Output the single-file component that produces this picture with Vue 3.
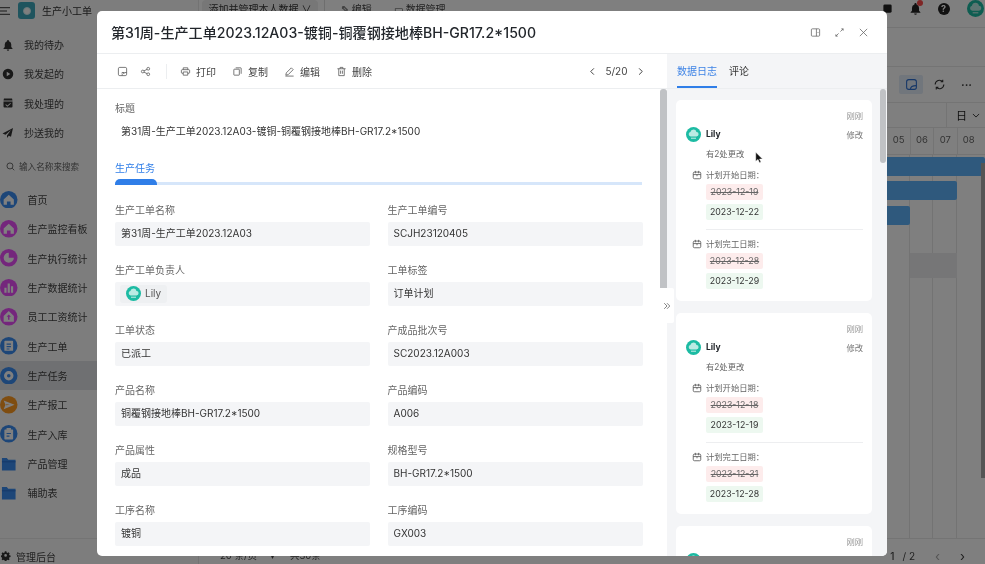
<script setup>
const P = {
  home: 'M12 5 5 11.5V19h4.5v-4.5h5V19H19v-7.5z',
  pie: 'M12 5a7 7 0 1 0 7 7h-7z',
  bars: 'M6 12h3v7H6zM10.5 6h3v13h-3zM15 10h3v9h-3z',
  houseUp: 'M12 4 5 11v8h14v-8zm0 5 3 3h-2v4h-2v-4H9z',
  doc: 'M7 5h10a1 1 0 0 1 1 1v12a1 1 0 0 1-1 1H7a1 1 0 0 1-1-1V6a1 1 0 0 1 1-1zm2 4v1.5h6V9zm0 3.5V14h6v-1.5zm0 3.2v1.3h4v-1.3z',
  ring: 'M12 5.5a6.5 6.5 0 1 0 0 13 6.5 6.5 0 0 0 0-13zm0 4a2.500 2.500 0 1 1 0 5 2.500 2.500 0 0 1 0-5z',
  send: 'M5 6 20 12 5 18l2.500-6zM8.500 11.200v1.600l5-.800z',
  clip: 'M9 4h6v2h2a1 1 0 0 1 1 1v12a1 1 0 0 1-1 1H7a1 1 0 0 1-1-1V7a1 1 0 0 1 1-1h2zm0 7v1.500h6V11zm0 3.500V16h4v-1.500z'
}
const topNav = [
  { t: '我的待办', d: 'M12 2a2 2 0 0 0-2 2v.6A6.500 6.500 0 0 0 5.500 11v5L3 19v1h18v-1l-2.500-3v-5A6.500 6.500 0 0 0 14 4.600V4a2 2 0 0 0-2-2zM9.500 21a2.500 2.500 0 0 0 5 0z' },
  { t: '我发起的', d: 'M12 1.500a10.500 10.500 0 1 0 0 21 10.500 10.500 0 0 0 0-21zM9.500 7.500l7 4.500-7 4.500z' },
  { t: '我处理的', d: 'M4 3h16l1 4H3zM3 9h18v10a2 2 0 0 1-2 2H5a2 2 0 0 1-2-2zm13.600 2.800-5.800 5-2.800-2.500-1.300 1.400 4.100 3.700 7.100-6.200z' },
  { t: '抄送我的', d: 'M22 2 1 13l6 2.500L18 6l-8 11v5l3.500-4.500 4.500 2z' }
]
const nav = [
  { t: '首页', c: '#3a8cf0', p: P.home },
  { t: '生产监控看板', c: '#e84cf8', p: P.home },
  { t: '生产执行统计', c: '#e84cf8', p: P.pie },
  { t: '生产数据统计', c: '#e84cf8', p: P.bars },
  { t: '员工工资统计', c: '#e84cf8', p: P.houseUp },
  { t: '生产工单', c: '#3a8cf0', p: P.doc },
  { t: '生产任务', c: '#3a8cf0', p: P.ring, on: true },
  { t: '生产报工', c: '#ff9a20', p: P.send },
  { t: '生产入库', c: '#3a8cf0', p: P.clip },
  { t: '产品管理', folder: true },
  { t: '辅助表', folder: true }
]
const tools = [
  { t: '打印', d: 'M7 8V4h10v4M7 16H5a2 2 0 0 1-2-2v-4a2 2 0 0 1 2-2h14a2 2 0 0 1 2 2v4a2 2 0 0 1-2 2h-2M7 13h10v7H7z' },
  { t: '复制', d: 'M8 4h11a1 1 0 0 1 1 1v12M4 8a1 1 0 0 1 1-1h10a1 1 0 0 1 1 1v11a1 1 0 0 1-1 1H5a1 1 0 0 1-1-1z' },
  { t: '编辑', d: 'M4 20l1-5L16 4l4 4L9 19zM3 22h18' },
  { t: '删除', d: 'M3 6h18M9 6V3h6v3M6 6v15h12V6M10 10v7M14 10v7' }
]
const fields = [
  ['生产工单名称', '第31周-生产工单2023.12A03'], ['生产工单编号', 'SCJH23120405'],
  ['生产工单负责人', 'Lily'], ['工单标签', '订单计划'],
  ['工单状态', '已派工'], ['产成品批次号', 'SC2023.12A003'],
  ['产品名称', '铜覆钢接地棒BH-GR17.2*1500'], ['产品编码', 'A006'],
  ['产品属性', '成品'], ['规格型号', 'BH-GR17.2*1500'],
  ['工序名称', '镀铜'], ['工序编码', 'GX003']
]
const logs = [
  { a: [['计划开始日期：', '2023-12-19', '2023-12-22'], ['计划完工日期：', '2023-12-28', '2023-12-29']] },
  { a: [['计划开始日期：', '2023-12-18', '2023-12-19'], ['计划完工日期：', '2023-12-31', '2023-12-28']] },
  { a: [] }
]
const days = ['05', '06', '07', '08']
</script>

<template>
  <div class="root">
    <aside class="side">
      <div class="brand">
        <svg class="burger" viewBox="0 0 10 8"><path d="M0 .7h10M0 4h7M0 7.300h10" /></svg>
        <span class="logo"><i></i></span>
        <span class="brand-name">生产小工单</span>
      </div>
      <div class="top-list">
        <div v-for="n in topNav" :key="n.t" class="top-row">
          <svg class="top-ic" viewBox="0 0 24 24"><path :d="n.d" /></svg>
          <span>{{ n.t }}</span>
        </div>
      </div>
      <div class="search">
        <svg viewBox="0 0 24 24"><circle cx="10.500" cy="10.500" r="8" /><path d="m16.500 16.500 5.500 5.500" /></svg>
        <span>输入名称来搜索</span>
      </div>
      <div v-for="n in nav" :key="n.t" class="nav-row" :class="{ on: n.on }">
        <svg v-if="n.folder" class="nav-ic" viewBox="0 0 18 18"><path fill="#3a8cf0" d="M2 3h5l1.500 2H16v11H2z" /><path fill="#2a70d0" d="M2 6.500h14v1H2z" /></svg>
        <svg v-else class="nav-ic" viewBox="0 0 24 24"><circle cx="12" cy="12" r="12" :fill="n.c" /><path fill="#fff" fill-rule="evenodd" :d="n.p" /></svg>
        <span>{{ n.t }}</span>
      </div>
      <div class="admin">
        <svg viewBox="0 0 24 24"><path fill-rule="evenodd" d="m10 2h4l.7 3 2.500 1.100 2.700-1.600 2.700 2.800-1.600 2.700.9 2.400 3 .6v4l-3 .7-1 2.400 1.600 2.700-2.800 2.700-2.600-1.600-2.400 1-.7 3h-4l-.7-3-2.400-1-2.600 1.600-2.800-2.700 1.600-2.700-1-2.400-3-.7v-4l3-.6 1-2.400-1.600-2.700 2.800-2.800 2.600 1.600 2.400-1.100zm2 7a3.500 3.500 0 1 0 0 7 3.500 3.500 0 0 0 0-7z" transform="translate(0 -1) scale(.92)" /></svg>
        <span>管理后台</span>
      </div>
    </aside>

    <main class="page">
      <header class="bar-top">
        <span class="ghost-btn">添加并管理本人数据 ∨</span>
        <span class="bar-sep"></span>
        <span class="bar-link">✎ 编辑</span>
        <span class="bar-link wide">▭ 数据管理</span>
        <span class="bar-right">
          <svg class="rt-ic" viewBox="0 0 24 24"><rect x="3" y="3" width="18" height="18" rx="3" /></svg>
          <span class="bell">
            <svg class="rt-ic" viewBox="0 0 24 24"><path d="M12 2a2 2 0 0 0-2 2v.6A6.500 6.500 0 0 0 5.500 11v5L3 19v1h18v-1l-2.500-3v-5A6.500 6.500 0 0 0 14 4.600V4a2 2 0 0 0-2-2zM9.500 21a2.500 2.500 0 0 0 5 0z" /></svg>
            <i class="dot"></i>
          </span>
          <span class="help">?</span>
          <svg class="bg-avatar" viewBox="0 0 24 24">
            <circle cx="12" cy="12" r="12" fill="#1cbba3" />
            <path fill="#fff" fill-opacity=".7" d="M7.500 15a3.500 3.500 0 0 1-.5-6.900 5 5 0 0 1 9.800-.1A3.500 3.500 0 0 1 16.500 15z" />
            <rect x="8" y="17" width="8" height="2" fill="#fff" fill-opacity=".6" />
          </svg>
        </span>
      </header>
      <div class="bar-tabs"></div>
      <div class="bar-tools">
        <span class="tool-on">
          <svg viewBox="0 0 24 24"><rect x="3" y="3" width="18" height="18" rx="4" /><path d="M10 21c0-5 3-7 11-7" /></svg>
        </span>
        <svg class="tool-ref" viewBox="0 0 24 24"><path d="M20 12a8 8 0 0 1-14 5M4 12a8 8 0 0 1 14-5M18 3v4h-4M6 21v-4h4" /></svg>
        <span class="tool-dots">···</span>
      </div>
      <div class="bar-view"><span class="view-sep"></span><span>日</span><svg viewBox="0 0 12 8"><path d="m1 1.500 5 5 5-5" /></svg></div>
      <div class="bar-days"><span v-for="d in days" :key="d">{{ d }}</span></div>
      <div class="chart">
        <i class="gline" style="right: 75px"></i>
        <i class="gline" style="right: 52px"></i>
        <i class="gline" style="right: 28px"></i>
        <i class="gbar" style="top: 2px; right: 0; width: 300px"></i>
        <i class="gbar" style="top: 26px; right: 28px; width: 300px"></i>
        <i class="gbar" style="top: 51px; right: 75px; width: 300px"></i>
        <i class="gshade"></i>
        <i class="gscroll"></i>
      </div>
      <footer class="bar-foot">
        <span class="foot-a">20 条/页</span>
        <span class="foot-b">▾</span>
        <span class="foot-c">共30条</span>
        <span class="foot-r"><b>1</b><span>/ 2</span><em class="faint">‹</em><em>›</em></span>
      </footer>
    </main>

    <div class="overlay">
      <section class="modal">
        <header class="m-head">
          <h1>第31周-生产工单2023.12A03-镀铜-铜覆钢接地棒BH-GR17.2*1500</h1>
          <svg class="h-ic" viewBox="0 0 24 24"><rect x="3" y="4" width="18" height="16" rx="2" /><path d="M14 4v16M16.500 12h2" /></svg>
          <svg class="h-ic" viewBox="0 0 24 24"><path d="M14 10l6-6M16 4h4v4M10 14l-6 6M8 20H4v-4" /></svg>
          <svg class="h-ic" viewBox="0 0 24 24"><path d="m4 4 16 16M20 4 4 20" /></svg>
        </header>
        <div class="m-body">
          <div class="left">
            <div class="toolbar">
              <svg class="t-ic" viewBox="0 0 24 24"><rect x="3" y="3" width="18" height="18" rx="3" /><path d="M11 21c0-4 3-7 10-7M10 16a3 2 0 0 1 6 0" /></svg>
              <svg class="t-ic second" viewBox="0 0 24 24"><circle cx="6" cy="12" r="3" /><circle cx="18" cy="6" r="3" /><circle cx="18" cy="18" r="3" /><path d="m8.700 10.600 6.600-3.200M8.700 13.400l6.600 3.200" /></svg>
              <i class="t-sep"></i>
              <span v-for="t in tools" :key="t.t" class="t-btn">
                <svg class="t-ic" viewBox="0 0 24 24"><path :d="t.d" /></svg>
                {{ t.t }}
              </span>
              <span class="pager">
                <svg viewBox="0 0 10 12"><path d="M7 1.500 2.500 6 7 10.500" /></svg>
                <span>5/20</span>
                <svg viewBox="0 0 10 12"><path d="M3 1.500 7.500 6 3 10.500" /></svg>
              </span>
            </div>
            <div class="form">
              <div class="lbl">标题</div>
              <div class="title-val">第31周-生产工单2023.12A03-镀铜-铜覆钢接地棒BH-GR17.2*1500</div>
              <div class="sec">生产任务</div>
              <div class="sec-bar"><i></i></div>
              <div class="grid">
                <div v-for="f in fields" :key="f[0]" class="field">
                  <div class="lbl">{{ f[0] }}</div>
                  <div class="val">
                    <span v-if="f[1] === 'Lily'" class="person">
                      <svg class="av" viewBox="0 0 24 24">
                        <circle cx="12" cy="12" r="12" fill="#1cbba3" />
                        <path fill="#fff" fill-opacity=".7" d="M7.500 15a3.500 3.500 0 0 1-.5-6.900 5 5 0 0 1 9.800-.1A3.500 3.500 0 0 1 16.500 15z" />
                        <rect x="8" y="17" width="8" height="2" fill="#fff" fill-opacity=".6" />
                      </svg>
                      Lily
                    </span>
                    <template v-else>{{ f[1] }}</template>
                  </div>
                </div>
              </div>
            </div>
            <i class="scroll-l"></i>
          </div>
          <div class="right">
            <nav class="tabs">
              <span class="tab active">数据日志</span>
              <span class="tab">评论</span>
            </nav>
            <div class="cards">
              <article v-for="(l, i) in logs" :key="i" class="card">
                <div class="when">刚刚</div>
                <div class="who">
                  <svg class="av" viewBox="0 0 24 24">
                    <circle cx="12" cy="12" r="12" fill="#1cbba3" />
                    <path fill="#fff" fill-opacity=".7" d="M7.500 15a3.500 3.500 0 0 1-.5-6.900 5 5 0 0 1 9.800-.1A3.500 3.500 0 0 1 16.500 15z" />
                    <rect x="8" y="17" width="8" height="2" fill="#fff" fill-opacity=".6" />
                  </svg>
                  <b>Lily</b>
                  <span>修改</span>
                </div>
                <div v-if="l.a.length" class="count">有2处更改</div>
                <div v-for="(c, j) in l.a" :key="j" class="change" :class="{ last: j === 1 }">
                  <div class="c-name">
                    <svg viewBox="0 0 24 24"><rect x="3" y="5" width="18" height="16" rx="3" /><path d="M3 11h18M8 2v6M16 2v6M12 11v4" /></svg>
                    {{ c[0] }}
                  </div>
                  <div class="chip old">{{ c[1] }}</div>
                  <div class="chip new">{{ c[2] }}</div>
                </div>
              </article>
            </div>
            <i class="scroll-r"></i>
          </div>
          <span class="collapse">
            <svg viewBox="0 0 10 10"><path d="m1.500 1.500 3.500 3.500-3.500 3.500M5 1.500 8.500 5 5 8.500" /></svg>
          </span>
        </div>
      </section>
      <svg class="cursor" viewBox="0 0 12 16"><path d="M1 1v12l3-2.500L6 15l2-1-2-4h4z" fill="#111" stroke="#fff" stroke-width=".6" /></svg>
    </div>
  </div>
</template>

<style>
html, body { margin: 0; background: #fff; }
</style>

<style scoped>
.root {
  position: relative;
  display: flex;
  height: 100vh;
  overflow: hidden;
  background: #fff;
  color: #222;
  font-family: Inter, "Noto Sans CJK SC", sans-serif;
  font-size: 10px;
  filter: blur(.35px);
}
svg { display: block; flex: none; }

/* background page */
.side { width: 199px; flex: none; background: #fafafa; border-right: 1px solid #e6e6e6; box-sizing: border-box; display: flex; flex-direction: column; }
.brand { height: 21px; display: flex; align-items: center; color: #333; }
.burger { width: 10px; height: 8px; fill: none; stroke: #333; stroke-width: 1; margin-right: 8px; }
.logo { width: 17px; height: 17px; border-radius: 3px; background: #3ea9bd; display: flex; align-items: center; justify-content: center; margin-right: 7px; }
.logo i { width: 8px; height: 8px; border-radius: 50%; background: #fff; border: 1px solid #cfeef2; box-sizing: border-box; }
.brand-name { font-size: 10px; }
.top-list { margin-top: 9px; }
.top-row { height: 29.330px; display: flex; align-items: center; color: #444; }
.top-ic { width: 12px; height: 12px; fill: #333; margin: 0 10px 0 2px; }
.search { display: flex; align-items: center; height: 20px; margin-top: 9px; margin-bottom: 8.500px; padding-left: 6px; color: #666; font-size: 8.600px; }
.search svg { width: 9px; height: 9px; fill: none; stroke: #444; stroke-width: 2; margin-right: 4px; }
.nav-row { height: 29.330px; display: flex; align-items: center; color: #444; flex: none; }
.nav-row.on { background: #dfe1e4; }
.nav-ic { width: 17.500px; height: 17.500px; margin-right: 10px; }
.admin { margin-top: auto; height: 26px; border-top: 1px solid #e8e8e8; box-sizing: border-box; display: flex; align-items: center; padding: 9px 0 0 1px; color: #444; }
.admin svg { width: 10px; height: 10px; fill: #333; margin-right: 5px; }

.page { flex: 1; min-width: 0; display: flex; flex-direction: column; background: #fff; }
.bar-top { height: 28px; flex: none; border-bottom: 1px solid #e8e8e8; box-sizing: border-box; display: flex; align-items: flex-start; }
.ghost-btn { margin-left: 3px; width: 116px; height: 20px; line-height: 18px; border-radius: 4px; background: #eee; text-align: center; font-size: 10px; white-space: nowrap; overflow: hidden; color: #333; }
.bar-sep { width: 1px; height: 20px; background: #ddd; margin: 0 16px 0 6px; }
.bar-link { line-height: 18px; font-size: 10px; color: #444; white-space: nowrap; }
.bar-link.wide { margin-left: 22px; }
.bar-right { margin-left: auto; display: flex; align-items: center; height: 27px; margin-top: -5px; margin-right: 1.500px; }
.rt-ic { width: 11px; height: 11px; fill: #222; }
.bell { position: relative; margin-left: 16.500px; }
.bell .rt-ic { width: 13px; height: 13px; }
.dot { position: absolute; top: -2px; right: -1px; width: 6px; height: 6px; border-radius: 50%; background: #ff4d4d; }
.help { margin-left: 15.500px; width: 12px; height: 12px; border-radius: 50%; background: #222; color: #fff; font-size: 9px; font-weight: 700; line-height: 12px; text-align: center; }
.bg-avatar { width: 17px; height: 17px; margin-left: 17px; }
.bar-tabs { height: 39px; flex: none; border-bottom: 1px solid #e8e8e8; box-sizing: border-box; }
.bar-tools { height: 36px; flex: none; border-bottom: 1px solid #e8e8e8; box-sizing: border-box; display: flex; align-items: center; justify-content: flex-end; padding-right: 11px; }
.tool-on { width: 24px; height: 19px; background: #e3ecf8; border-radius: 2px; display: flex; align-items: center; justify-content: center; }
.tool-on svg { width: 13px; height: 13px; fill: none; stroke: #2c6fd0; stroke-width: 2; }
.tool-ref { width: 13px; height: 13px; fill: none; stroke: #333; stroke-width: 2; margin-left: 10px; }
.tool-dots { margin-left: 15px; width: 13px; font-size: 11px; font-weight: 700; color: #333; }
.bar-view { height: 25px; flex: none; border-bottom: 1px solid #e8e8e8; box-sizing: border-box; display: flex; align-items: center; justify-content: flex-end; padding-right: 5px; font-size: 11px; color: #222; }
.view-sep { width: 1px; height: 25px; background: #e8e8e8; margin-right: 9px; }
.bar-view svg { width: 8px; height: 5px; fill: none; stroke: #333; stroke-width: 1.500; margin-left: 5px; }
.bar-days { height: 27px; flex: none; border-bottom: 1px solid #e8e8e8; box-sizing: border-box; display: flex; justify-content: flex-end; padding-right: 5px; }
.bar-days span { width: 23.400px; height: 26px; line-height: 24px; text-align: center; color: #666; font-size: 9.500px; border-left: 1px solid #e8e8e8; box-sizing: border-box; }
.chart { flex: 1; min-height: 0; position: relative; overflow: hidden; background: #fff; }
.gline { position: absolute; top: 0; bottom: 0; width: 1px; background: #e6e6e6; }
.gbar { position: absolute; height: 19px; border-radius: 2px; background: #5fb3fb; }
.gshade { position: absolute; top: 98px; right: 28px; width: 47px; height: 25px; background: #ececee; }
.gscroll { position: absolute; top: 8px; bottom: 60px; right: 0; width: 4px; background: #aaa; }
.bar-foot { height: 26px; flex: none; border-top: 1px solid #e8e8e8; box-sizing: border-box; display: flex; align-items: flex-end; padding-bottom: 2px; line-height: 12px; color: #444; font-size: 9.500px; white-space: nowrap; }
.foot-a { margin-left: 21px; width: 50px; }
.foot-b { width: 20px; }
.foot-c { width: 40px; }
.foot-r { margin-left: auto; display: flex; margin-right: 20px; font-size: 10px; }
.foot-r b { font-weight: 500; margin-right: 8px; }
.foot-r em { font-style: normal; margin-left: 20px; font-size: 13px; line-height: 12px; }
.foot-r em.faint { color: #aaa; }

/* dialog */
.overlay { position: absolute; inset: 0; background: rgba(0, 0, 0, .5); display: flex; align-items: flex-start; padding: 11px 0 0 97px; box-sizing: border-box; }
.modal { width: 790px; height: 545px; background: #fff; border-radius: 5px; overflow: hidden; display: flex; flex-direction: column; }
.m-head { height: 43px; flex: none; box-sizing: border-box; border-bottom: 1px solid #eceef0; display: flex; align-items: center; padding: 0 18px 0 14px; }
.m-head h1 { margin: 0; flex: 1; font-size: 14.100px; font-weight: 500; color: #22262b; white-space: nowrap; }
.h-ic { width: 11px; height: 11px; fill: none; stroke: #666; stroke-width: 1.700; margin-left: 13px; }
.m-body { flex: 1; min-height: 0; display: flex; position: relative; }
.left { width: 570px; flex: none; position: relative; display: flex; flex-direction: column; overflow: hidden; }
.toolbar { height: 35px; flex: none; box-sizing: border-box; border-bottom: 1px solid #eceef0; display: flex; align-items: center; padding: 0 23.500px 0 20px; color: #444; }
.t-ic { width: 11px; height: 11px; fill: none; stroke: #555; stroke-width: 1.700; }
.t-ic.second { margin-left: 12px; }
.t-sep { width: 1px; height: 15px; background: #eceef0; margin: 0 13px 0 15px; }
.t-btn { display: flex; align-items: center; gap: 5px; margin-right: 16px; font-size: 10px; white-space: nowrap; }
.pager { margin-left: auto; display: flex; align-items: center; gap: 9px; font-size: 10px; color: #444; }
.pager svg { width: 7px; height: 9px; fill: none; stroke: #333; stroke-width: 1.300; }
.form { padding: 12px 25px 0 18px; }
.lbl { height: 14px; line-height: 14px; color: #666; font-size: 10px; white-space: nowrap; }
.title-val { height: 23.500px; line-height: 23.500px; margin-top: 4.500px; padding-left: 6px; font-size: 10px; color: #333; white-space: nowrap; }
.sec { margin-top: 18px; height: 14px; line-height: 14px; color: #2f7ee8; font-size: 10px; }
.sec-bar { position: relative; height: 6px; margin-top: 4px; }
.sec-bar::before { content: ""; position: absolute; left: 0; right: 0; bottom: 0; height: 3px; background: #d6e6fa; }
.sec-bar i { position: absolute; left: 0; top: 0; width: 42px; height: 6px; background: #2f7ee8; border-radius: 5px 5px 0 0; }
.grid { margin-top: 18px; display: grid; grid-template-columns: 255px 255px; column-gap: 17.500px; row-gap: 17.500px; }
.val { margin-top: 5px; height: 23.500px; line-height: 23.500px; padding-left: 6px; background: #f4f5f7; border-radius: 2px; color: #333; font-size: 10px; display: flex; align-items: center; white-space: nowrap; }
.person { display: flex; align-items: center; gap: 4px; height: 18px; margin-left: -1px; padding: 0 6px; background: #eef0f2; border-radius: 3px; color: #555; }
.av { width: 15px; height: 15px; }
.scroll-l { position: absolute; top: 35px; right: 0; width: 7px; height: 199px; border-radius: 3px 3px 0 0; background: #c0c2c5; }

.right { flex: 1; min-width: 0; position: relative; background: #f4f5f7; display: flex; flex-direction: column; overflow: hidden; }
.tabs { height: 35px; flex: none; box-sizing: border-box; border-bottom: 1px solid #eceef0; display: flex; gap: 12px; padding-left: 10px; }
.tab { height: 34px; line-height: 34px; font-size: 10px; color: #333; box-sizing: border-box; }
.tab.active { color: #3d83e6; border-bottom: 2px solid #2f7ee8; }
.cards { padding: 11px 15px 0 9px; display: flex; flex-direction: column; gap: 12px; }
.card { height: 201px; flex: none; background: #fff; border-radius: 5px; box-sizing: border-box; padding: 9.500px 9px 0 9.500px; }
.when { text-align: right; height: 12px; line-height: 12px; font-size: 8.300px; color: #999; }
.who { margin-top: 5px; height: 15px; display: flex; align-items: center; font-size: 8.300px; }
.who b { margin-left: 5.500px; font-size: 8.500px; font-weight: 700; color: #22262b; }
.who span { margin-left: auto; color: #777; }
.count { margin: 5px 0 0 20.500px; height: 14px; line-height: 14px; font-size: 8.300px; color: #666; }
.change { margin-left: 20.500px; height: 61px; margin-top: 7px; border-bottom: 1px solid #edeef0; }
.change.last { border-bottom: 0; margin-top: 7px; }
.c-name { position: relative; height: 14px; line-height: 14px; font-size: 8.300px; color: #666; white-space: nowrap; }
.c-name svg { position: absolute; left: -14px; top: 2px; width: 10px; height: 10px; fill: none; stroke: #555; stroke-width: 2; }
.chip { width: 57px; height: 16px; line-height: 16px; margin-top: 4px; border-radius: 2px; text-align: center; font-size: 8.800px; }
.chip.old { margin-top: 2px; background: #fdecec; color: #666; text-decoration: line-through; }
.chip.new { background: #edf8f0; color: #333; }
.scroll-r { position: absolute; top: 35px; right: 1px; width: 6px; height: 74px; border-radius: 3px; background: #c0c2c5; }
.collapse { position: absolute; left: 564px; top: 234px; width: 12.500px; height: 35px; background: #fff; border-radius: 2px; display: flex; align-items: center; justify-content: center; }
.collapse svg { width: 8px; height: 8px; fill: none; stroke: #666; stroke-width: 1; }
.cursor { position: absolute; left: 754.500px; top: 150.500px; width: 9px; height: 13px; }
</style>
